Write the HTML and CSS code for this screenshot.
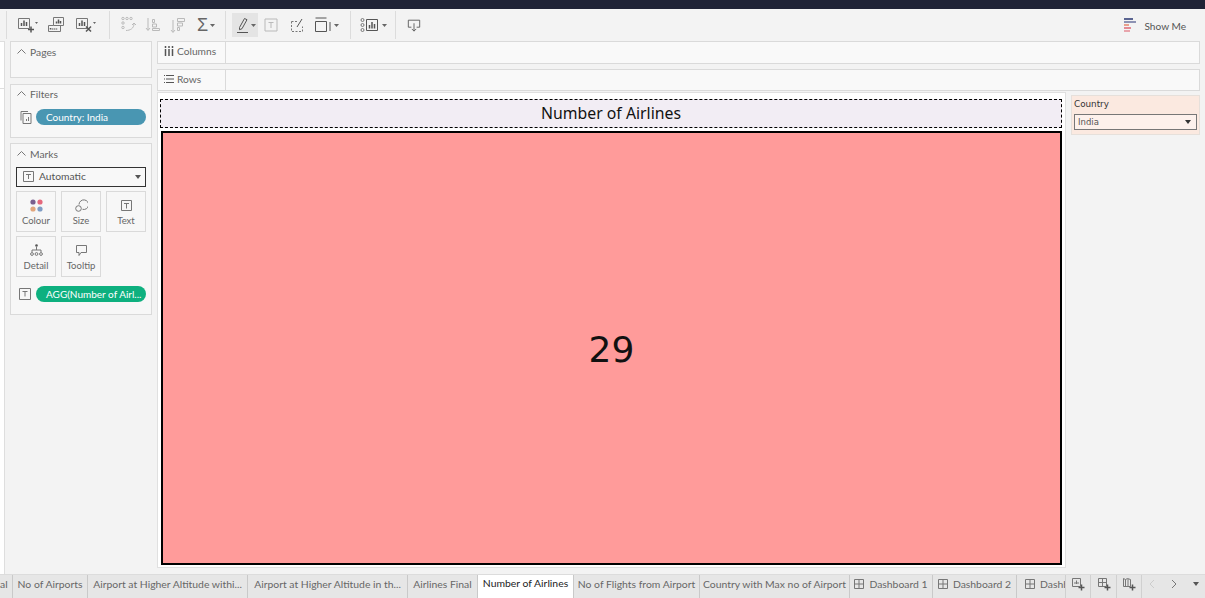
FILE: index.html
```html
<!DOCTYPE html>
<html>
<head>
	<title>Number of Airlines</title>
	<link rel="stylesheet" href="styles.css">
</head>
<body>
	<div class="topbar"></div>

	<div class="toolbar">
		<div class="tool-group group-a">
			<svg class="icon w22" viewBox="0 0 22 18"><path d="M1.500 2.500h11v10h-11z" class="st"/><path d="M4.500 10V7M7 10V4.500M9.500 10V6" class="bars"/><path d="M11 13.500h6M14 10.500v6" class="bars"/><path d="M18 6l3 0-1.500 2z" class="fill"/></svg>
			<svg class="icon w22" viewBox="0 0 22 18"><path d="M7.500 1.500h10v8h-10z" class="st"/><path d="M10.500 7.500V5.500M12.500 7.500V3.500M14.500 7.500V5" class="bars"/><path d="M7.500 9.500h-5v6h12v-6" class="st"/><path d="M4.500 13.500V12M6.500 13.500v-1M8.500 13.500v-1M10.500 13.500v-1" class="bars"/></svg>
			<svg class="icon w22" viewBox="0 0 22 18"><path d="M1.500 2.500h11v10h-11z" class="st"/><path d="M4.500 10V7M7 10V4.500M9.500 10V6" class="bars"/><path d="M11 10.500l5 5M16 10.500l-5 5" class="bars"/><path d="M18 6l3 0-1.500 2z" class="fill"/></svg>
		</div>
		<div class="tool-group group-b">
			<svg class="icon w16 faint" viewBox="0 0 16 18"><circle cx="2" cy="2.500" r="1.200" class="st"/><circle cx="6" cy="2.500" r="1.200" class="st"/><circle cx="10" cy="2.500" r="1.200" class="st"/><circle cx="2" cy="7" r="1.200" class="st"/><circle cx="2" cy="11.500" r="1.200" class="st"/><path d="M5 14.500c4 0 8-2 8-7M11 9l2-2 2 2" class="st"/></svg>
			<svg class="icon w16 faint gap-s" viewBox="0 0 16 18"><path d="M3 2v12M1 12l2 2.500 2-2.500M7.500 3.500h2v3h-2zM7.500 8h4v3h-4zM7.500 12.500h7v2h-7z" class="st"/></svg>
			<svg class="icon w16 faint gap-s2" viewBox="0 0 16 18"><path d="M3 4v12M1 14l2 2.500 2-2.500M7.500 2.500h7v3h-7zM7.500 7h5v3h-5zM7.500 11.500h2v3h-2z" class="st"/></svg>
			<span class="sigma">Σ</span><svg class="caret" viewBox="0 0 5 3"><path d="M0 0h5L2.500 3z" class="fill"/></svg>
		</div>
		<div class="tool-group group-c">
			<div class="tool-on">
				<svg class="icon w14" viewBox="0 0 14 18"><path d="M2.500 11.500L7.500 2.500l2.500 1.200-5 9-2.500 1zM0 16.500h11" class="st dark"/></svg><svg class="caret tight" viewBox="0 0 5 3"><path d="M0 0h5L2.500 3z" class="fill"/></svg>
			</div>
			<svg class="icon w14 faint gap-t" viewBox="0 0 14 14"><path d="M1 1h12v12H1zM4.500 4.500h5M7 4.500v5.500" class="st"/></svg>
			<svg class="icon w14 gap-u" viewBox="0 0 14 16"><path d="M1.500 4.500h6M1.500 4.500v10h11v-5" class="st dash"/><path d="M7 10l5-8" class="st dark"/></svg>
			<svg class="icon w18 gap-v" viewBox="0 0 18 16"><path d="M1.500 1h11M1.500 4.500h11v10h-11zM16 5v9" class="st dark"/></svg><svg class="caret" viewBox="0 0 5 3"><path d="M0 0h5L2.500 3z" class="fill"/></svg>
		</div>
		<div class="tool-group group-d">
			<svg class="icon w18" viewBox="0 0 18 16"><circle cx="2.500" cy="3" r="1.500" class="st"/><circle cx="2.500" cy="8" r="1.500" class="st"/><circle cx="2.500" cy="13" r="1.500" class="st"/><path d="M6.500 2.500h11v11h-11z" class="st dark"/><path d="M9.500 11.500V8M12 11.500V5M14.500 11.500V7" class="bars"/></svg><svg class="caret wide" viewBox="0 0 5 3"><path d="M0 0h5L2.500 3z" class="fill"/></svg>
		</div>
		<div class="tool-group group-e">
			<svg class="icon w16" viewBox="0 0 16 16"><path d="M5 10.500H1.500v-8h13v8H11M8 6v9M5.500 12.500L8 15l2.500-2.500" class="st dark"/></svg>
		</div>
		<div class="show-me">
			<svg class="show-icon" viewBox="0 0 13 15"><rect x="0" y="0" width="9" height="2" fill="#5b6591"/><rect x="0" y="3" width="12" height="2" fill="#8d93b4"/><rect x="0" y="6" width="5" height="2" fill="#e8a08d"/><rect x="0" y="9" width="7" height="2" fill="#e48a94"/><rect x="0" y="12" width="6" height="2" fill="#e8a5ac"/></svg>
			<span>Show Me</span>
		</div>
	</div>

	<div class="main">
		<div class="edge"><div class="edge-top"></div></div>

		<div class="side">
			<div class="card card-pages">
				<div class="card-head"><svg class="chev" viewBox="0 0 9 5"><path d="M.5 4.500l4-4 4 4" class="st"/></svg>Pages</div>
			</div>
			<div class="card card-filters">
				<div class="card-head head-up"><svg class="chev" viewBox="0 0 9 5"><path d="M.5 4.500l4-4 4 4" class="st"/></svg>Filters</div>
				<div class="pill-row">
					<svg class="pill-icon" viewBox="0 0 12 13"><path d="M1 9.500V.5h7M3 2.500h8v10H3zM6.500 10V8M8.500 10V6" class="st"/></svg>
					<div class="pill pill-blue">Country: India</div>
				</div>
			</div>
			<div class="card card-marks">
				<div class="card-head"><svg class="chev" viewBox="0 0 9 5"><path d="M.5 4.500l4-4 4 4" class="st"/></svg>Marks</div>
				<div class="mark-select">
					<svg class="t-box" viewBox="0 0 11 11"><path d="M.5.5h10v10H.5zM3 3.500h5M5.500 3.500v4.500" class="st"/></svg>
					<span>Automatic</span>
					<svg class="select-caret" viewBox="0 0 6 4"><path d="M0 0h6L3 4z" fill="#555"/></svg>
				</div>
				<div class="mark-grid">
					<div class="mark-btn">
						<svg class="mark-icon" viewBox="0 0 13 13"><circle cx="3" cy="3" r="2.600" fill="#7a5f8e"/><circle cx="10" cy="3" r="2.600" fill="#e5687c"/><circle cx="3" cy="10" r="2.600" fill="#e2a67d"/><circle cx="10" cy="10" r="2.600" fill="#7f9cc4"/></svg>
						Colour
					</div>
					<div class="mark-btn">
						<svg class="mark-icon" viewBox="0 0 13 13"><path d="M4 5.500A4.800 4.800 0 1 1 7.500 10.300" class="st"/><circle cx="3.500" cy="9.500" r="2.800" class="st"/></svg>
						Size
					</div>
					<div class="mark-btn">
						<svg class="mark-icon" viewBox="0 0 13 13"><path d="M1.500 1.500h10v10h-10zM4 4.500h5M6.500 4.500v5" class="st"/></svg>
						Text
					</div>
					<div class="mark-btn">
						<svg class="mark-icon" viewBox="0 0 13 13"><circle cx="6.500" cy="1.500" r="1.300" fill="#555"/><path d="M6.500 3v3M2 8V6h9v2" class="st"/><circle cx="2" cy="10" r="1.400" class="st"/><circle cx="6.500" cy="10" r="1.400" class="st"/><circle cx="11" cy="10" r="1.400" class="st"/></svg>
						Detail
					</div>
					<div class="mark-btn">
						<svg class="mark-icon" viewBox="0 0 13 13"><path d="M1.500 1.500h10v7H6l-2 3v-3H1.500z" class="st"/></svg>
						Tooltip
					</div>
				</div>
				<div class="pill-row pill-row-marks">
					<svg class="pill-icon" viewBox="0 0 12 12"><path d="M.5.5h11v11H.5zM3.500 3.500h5M6 3.500v5" class="st"/></svg>
					<div class="pill pill-green">AGG(Number of Airl...</div>
				</div>
			</div>
		</div>

		<div class="center">
			<div class="shelf shelf-cols">
				<div class="shelf-label"><svg class="shelf-icon" viewBox="0 0 10 10"><path d="M1.500 3v7M5 3v7M8.500 3v7M1.500 0v2M5 0v2M8.500 0v2" class="bars"/></svg>Columns</div>
			</div>
			<div class="shelf shelf-rows">
				<div class="shelf-label"><svg class="shelf-icon" viewBox="0 0 10 10"><path d="M0 1.500h1M2 1.500h8M0 5h1M2 5h8M0 8.500h1M2 8.500h8" class="st dark"/></svg>Rows</div>
			</div>
			<div class="view-row">
				<div class="view">
					<div class="view-title">Number of Airlines</div>
					<div class="view-pane">29</div>
				</div>
				<div class="quick-filter">
					<div class="qf-title">Country</div>
					<div class="qf-select">
						<span>India</span>
						<svg class="qf-caret" viewBox="0 0 6 4"><path d="M0 0h6L3 4z" fill="#333"/></svg>
					</div>
				</div>
			</div>
		</div>
	</div>

	<div class="tabs">
		<div class="tab tab-1">al</div>
		<div class="tab tab-2">No of Airports</div>
		<div class="tab tab-3">Airport at Higher Altitude withi...</div>
		<div class="tab tab-4">Airport at Higher Altitude in th...</div>
		<div class="tab tab-5">Airlines Final</div>
		<div class="tab tab-6 active">Number of Airlines</div>
		<div class="tab tab-7">No of Flights from Airport</div>
		<div class="tab tab-8">Country with Max no of Airport</div>
		<div class="tab tab-9"><svg class="dash-icon" viewBox="0 0 10 10"><path d="M.5.5h9v9h-9zM5 .5v9M.5 5h9" class="st"/></svg>Dashboard 1</div>
		<div class="tab tab-10"><svg class="dash-icon" viewBox="0 0 10 10"><path d="M.5.5h9v9h-9zM5 .5v9M.5 5h9" class="st"/></svg>Dashboard 2</div>
		<div class="tab tab-11"><svg class="dash-icon" viewBox="0 0 10 10"><path d="M.5.5h9v9h-9zM5 .5v9M.5 5h9" class="st"/></svg>Dashb</div>
		<div class="tab-tool tool-1"><svg class="add-icon" viewBox="0 0 14 14"><path d="M1.500 1.500h8v8h-8z" class="st"/><path d="M4 7V5M5.500 7V3.500M7 7V5" class="st"/><path d="M7.500 10.500h6M10.500 7.500v6" class="bars"/></svg></div>
		<div class="tab-tool tool-2"><svg class="add-icon" viewBox="0 0 14 14"><path d="M1.500 1.500h8v8h-8zM5.500 1.500v8M1.500 5.500h8" class="st"/><path d="M7.500 10.500h6M10.500 7.500v6" class="bars"/></svg></div>
		<div class="tab-tool tool-3"><svg class="add-icon" viewBox="0 0 14 14"><path d="M1.500 1.500l2 1 2-1 3 1v7h-7zM3.500 2.500v7M6 2v7" class="st"/><path d="M7.500 10.500h6M10.500 7.500v6" class="bars"/></svg></div>
		<div class="tab-nav">
			<svg class="nav-icon" viewBox="0 0 6 10"><path d="M5 1L1 5l4 4" class="st nav-off"/></svg>
			<svg class="nav-icon" viewBox="0 0 6 10"><path d="M1 1l4 4-4 4" class="st"/></svg>
			<svg class="nav-caret" viewBox="0 0 6 4"><path d="M0 0h6L3 4z" fill="#555"/></svg>
		</div>
	</div>
</body>
</html>
```

FILE: styles.css
```css
* {
    box-sizing: border-box;
}

html, body {
    margin: 0;
    height: 100%;
}

body {
    width: 1205px;
    height: 598px;
    overflow: hidden;
    display: flex;
    flex-direction: column;
    background-color: #f3f3f3;
    font-family: Lato, "Liberation Sans", sans-serif;
    font-size: 10.500px;
    color: #555;
}

svg {
    display: block;
    flex: none;
}

.st {
    fill: none;
    stroke: #777;
    stroke-width: 1;
}

.st.dark {
    stroke: #555;
}

.st.dash {
    stroke-dasharray: 2 1.500;
}

.st.nav-off {
    stroke: #ccc;
}

.bars {
    fill: none;
    stroke: #555;
    stroke-width: 1.500;
}

.fill {
    fill: #666;
}

.faint {
    opacity: 0.45;
}

/* top dark strip */
.topbar {
    height: 9px;
    background-color: #1f2336;
    flex: none;
}

/* toolbar */
.toolbar {
    height: 32px;
    flex: none;
    display: flex;
    align-items: center;
    padding-left: 6px;
}

.tool-group {
    height: 28px;
    display: flex;
    align-items: center;
    border-left: 1px solid #dcdcdc;
}

.group-a { width: 103px; padding-left: 10px; gap: 7px; }
.group-b { width: 116px; padding-left: 11px; }
.group-c { width: 125px; padding-left: 6px; }
.group-d { width: 45px; padding-left: 9px; }
.group-e { width: 40px; padding-left: 11px; }

.icon.w22 { width: 22px; height: 18px; }
.icon.w18 { width: 18px; height: 16px; }
.icon.w16 { width: 16px; height: 18px; }
.icon.w14 { width: 14px; height: 18px; }

.gap-s { margin-left: 8px; }
.gap-s2 { margin-left: 9px; }
.gap-t { margin-left: 6px; width: 14px; height: 14px; }
.gap-u { margin-left: 12px; height: 16px; }
.gap-v { margin-left: 10px; }
.group-e .icon { width: 14px; height: 14px; }

.sigma {
    margin-left: 11px;
    font-size: 18px;
    line-height: 18px;
    color: #666;
    font-family: "Liberation Sans", sans-serif;
}

.caret {
    width: 5px;
    height: 3px;
    margin-left: 2px;
}

.caret.tight {
    margin-left: 0;
}

.caret.wide {
    margin-left: 4px;
}

.tool-on {
    width: 26px;
    height: 24px;
    background-color: #e4e4e4;
    display: flex;
    align-items: center;
    padding-left: 5px;
}

.show-me {
    margin-left: auto;
    margin-right: 19px;
    padding-top: 2px;
    display: flex;
    align-items: center;
    gap: 7px;
    color: #555;
    font-size: 10.100px;
}

.show-icon {
    width: 13px;
    height: 15px;
    margin-top: -2px;
}

/* main area */
.main {
    flex: 1;
    min-height: 0;
    display: flex;
}

.edge {
    width: 5px;
    background-color: #fff;
    border-right: 1px solid #dedede;
    border-top: 1px solid #dedede;
    flex: none;
}

.edge-top {
    height: 47px;
    border-bottom: 1px solid #dedede;
}

.side {
    width: 147px;
    margin-left: 5px;
    flex: none;
    display: flex;
    flex-direction: column;
    gap: 6px;
}

.card {
    background-color: #f7f7f7;
    border: 1px solid #dadada;
    width: 142px;
}

.card-pages { height: 37px; }
.card-filters { height: 54px; margin-bottom: -1px; }
.card-marks { height: 172px; }

.card-head {
    display: flex;
    align-items: center;
    height: 19px;
    padding-left: 6px;
    font-size: 10.300px;
    color: #666;
}

.card-head.head-up {
    padding-bottom: 2px;
}

.chev {
    width: 9px;
    height: 5px;
    margin-right: 4px;
}

.pill-row {
    display: flex;
    align-items: center;
    padding: 5px 5px 0 9px;
}

.pill-icon {
    width: 12px;
    height: 13px;
    margin-right: 4px;
}

.pill {
    flex: 1;
    height: 16px;
    line-height: 16px;
    border-radius: 8px;
    color: #fff;
    padding-left: 10px;
    font-size: 10px;
    white-space: nowrap;
    overflow: hidden;
}

.pill-blue { background-color: #4996b2; }
.pill-green { background-color: #0eb07f; }

.mark-select {
    height: 20px;
    margin: 4px 5px 0 5px;
    padding-bottom: 2px;
    border: 1px solid #333;
    background-color: #f8f8f8;
    display: flex;
    align-items: center;
    padding-left: 6px;
    font-size: 10.300px;
    color: #555;
}

.t-box {
    width: 11px;
    height: 11px;
    margin-right: 5px;
}

.select-caret {
    width: 6px;
    height: 4px;
    margin-left: auto;
    margin-right: 4px;
    margin-top: 2px;
}

.mark-grid {
    display: grid;
    grid-template-columns: repeat(3, 40px);
    grid-auto-rows: 41px;
    gap: 4px 5px;
    margin: 4px 0 0 5px;
}

.mark-btn {
    border: 1px solid #dadada;
    display: flex;
    flex-direction: column;
    align-items: center;
    padding-top: 7px;
    gap: 3px;
    font-size: 9.500px;
    line-height: 12px;
    color: #666;
}

.mark-icon {
    width: 13px;
    height: 13px;
}

.pill-row-marks {
    padding-top: 9px;
    padding-left: 8px;
}

.pill-row-marks .pill-icon {
    width: 12px;
    height: 12px;
    margin-right: 5px;
}

/* center column */
.center {
    width: 1043px;
    flex: none;
    display: flex;
    flex-direction: column;
}

.shelf {
    background-color: #f9f9f9;
    border: 1px solid #dadada;
    display: flex;
    flex: none;
}

.shelf-cols { height: 23px; margin-bottom: 5px; }
.shelf-rows { height: 22px; margin-bottom: 1px; }

.shelf-label {
    width: 68px;
    border-right: 1px solid #dadada;
    display: flex;
    align-items: center;
    padding-left: 6px;
    gap: 3px;
    font-size: 10.200px;
    color: #666;
}

.shelf-cols .shelf-label { padding-bottom: 4px; }
.shelf-rows .shelf-label { padding-bottom: 3px; }

.shelf-icon {
    width: 10px;
    height: 10px;
}

.view-row {
    display: flex;
    align-items: flex-start;
    gap: 5px;
}

.view {
    width: 909px;
    height: 476px;
    flex: none;
    background-color: #fff;
    border: 1px solid #e0e0e0;
    padding: 6px 3px 2px 2px;
    display: flex;
    flex-direction: column;
}

.view-title {
    height: 29px;
    border: 1px dashed #000;
    background-color: #f2edf4;
    color: #111;
    font-size: 15.800px;
    line-height: 27px;
    text-align: center;
    flex: none;
    font-family: "Noto Sans", sans-serif;
}

.view-pane {
    height: 434px;
    margin: 3px 0 0 1px;
    padding-top: 2px;
    border: 2px solid #000;
    background-color: #ff9b9a;
    color: #111;
    font-family: "DejaVu Sans", sans-serif;
    font-size: 36px;
    display: flex;
    align-items: center;
    justify-content: center;
    flex: none;
}

/* right hand filter card */
.quick-filter {
    width: 129px;
    height: 40px;
    margin-top: 3px;
    flex: none;
    background-color: #fbe9e0;
    border: 1px solid #e6e0db;
    padding: 2px;
}

.qf-title {
    font-family: "DejaVu Sans", sans-serif;
    font-size: 8.800px;
    line-height: 13px;
    color: #333;
}

.qf-select {
    height: 16px;
    margin-top: 3px;
    background-color: #fdf1ec;
    border: 1px solid #777;
    display: flex;
    align-items: center;
    justify-content: space-between;
    padding: 0 5px 0 3px;
    font-family: "DejaVu Sans", sans-serif;
    font-size: 8.500px;
    color: #555;
}

.qf-caret {
    width: 6px;
    height: 4px;
}

/* tabs at the bottom */
.tabs {
    height: 24px;
    flex: none;
    display: flex;
    background-color: #e6e6e6;
    border-top: 1px solid #dcdcdc;
    overflow: hidden;
}

.tab {
    flex: none;
    display: flex;
    align-items: center;
    justify-content: center;
    padding-bottom: 6px;
    border-right: 1px solid #c9c9c9;
    font-size: 10.400px;
    color: #666;
    white-space: nowrap;
}

.tab-1 { width: 13px; justify-content: flex-start; overflow: hidden; }
.tab-2 { width: 75px; }
.tab-3 { width: 160px; }
.tab-4 { width: 160px; }
.tab-5 { width: 70px; }
.tab-6 { width: 96px; }
.tab-7 { width: 126px; }
.tab-8 { width: 150px; }
.tab-9 { width: 83px; }
.tab-10 { width: 84px; }
.tab-11 { width: 48px; justify-content: flex-start; padding-left: 8px; border-right: 0; }

.tab.active {
    background-color: #fff;
    color: #222;
    margin-top: -1px;
}

.dash-icon {
    width: 10px;
    height: 10px;
    margin-right: 5px;
}

.tab-tool {
    flex: none;
    display: flex;
    align-items: center;
    justify-content: center;
    padding-bottom: 5px;
    background-color: #e6e6e6;
    border-right: 1px solid #d0d0d0;
    position: relative;
}

.tool-1 { width: 26px; border-left: 1px solid #d0d0d0; }
.tool-2 { width: 26px; }
.tool-3 { width: 25px; }

.add-icon {
    width: 14px;
    height: 14px;
}

.tab-nav {
    flex: 1;
    display: flex;
    align-items: center;
    padding-left: 7px;
    padding-bottom: 5px;
    gap: 16px;
}

.nav-icon {
    width: 6px;
    height: 10px;
}

.nav-caret {
    width: 6px;
    height: 4px;
}
```
